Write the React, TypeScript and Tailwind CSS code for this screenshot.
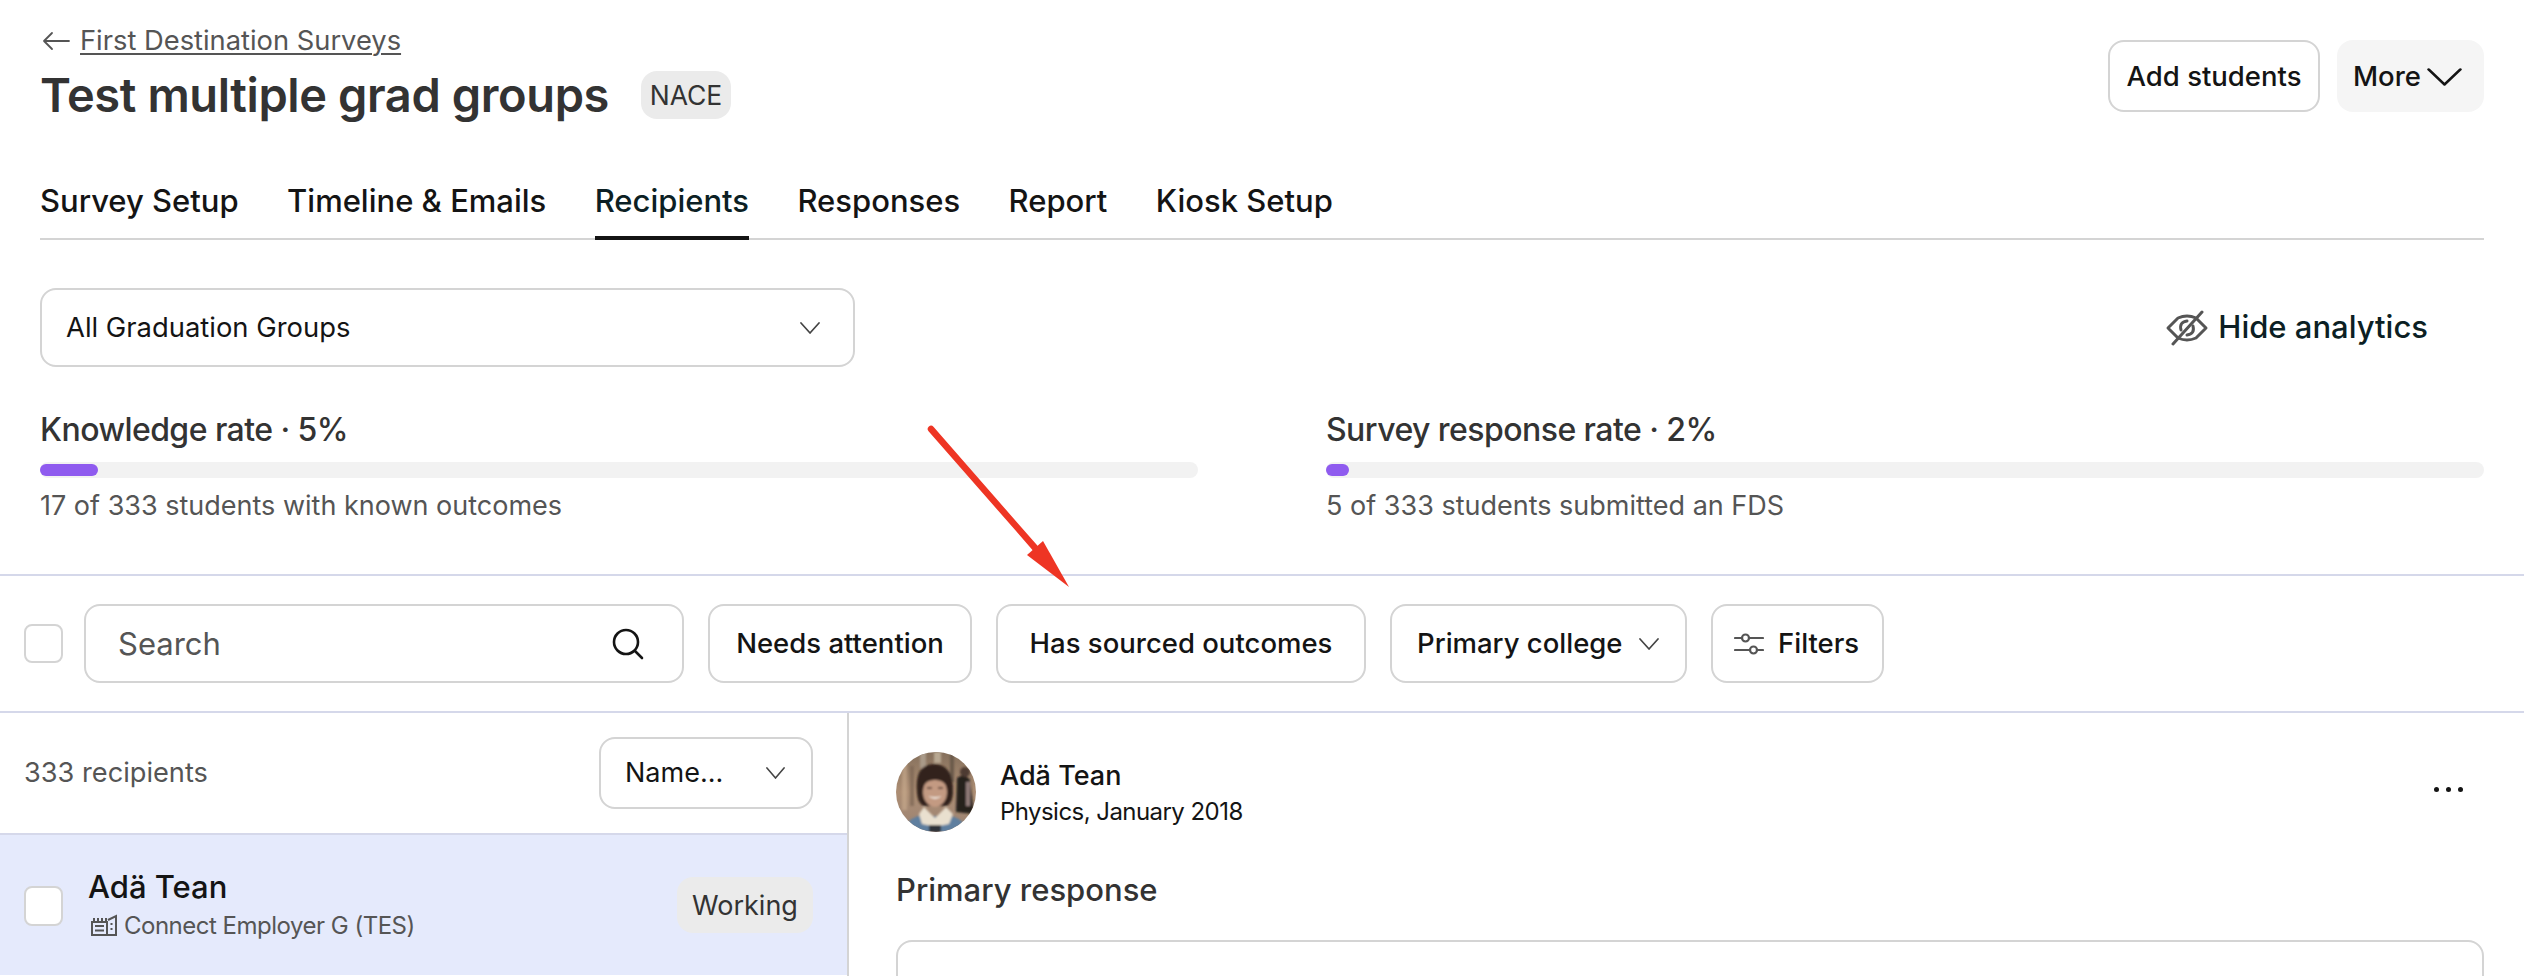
function Chevron({ className }: { className?: string }) {
	return (
		<svg viewBox="0 0 20 12" fill="none" stroke="currentColor" strokeWidth="1.7" strokeLinecap="round" strokeLinejoin="round" preserveAspectRatio="none" className={className}>
			<path d="M1 1 L10 11 L19 1" />
		</svg>
	)
}

function FilterButton({ children, className }: { children: React.ReactNode; className: string }) {
	return (
		<div className={`h-[79px] rounded-[16px] border-2 border-[#d4d4d4] flex items-center text-[27.5px] font-medium text-[#141414] ${className}`}>
			{children}
		</div>
	)
}

function Stat({ title, pct, sub, fill }: { title: string; pct: string; sub: string; fill: string }) {
	return (
		<div className="w-[1158px]">
			<div className="h-[36px] leading-[35px] text-[32px] font-medium text-[#333333] tracking-[-0.55px]">
				{title} · {pct}
			</div>
			<div className="mt-[14px] h-[16px] rounded-[8px] bg-[#f2f2f2] py-[2px]">
				<div className={`h-[12px] rounded-[6px] bg-[#8f5bef] ${fill}`} />
			</div>
			<div className="mt-[12px] h-[30px] leading-[31px] text-[27px] text-[#555555]">{sub}</div>
		</div>
	)
}

function Avatar() {
	return (
		<svg viewBox="0 0 80 80" className="w-[80px] h-[80px] rounded-full shrink-0">
			<defs>
				<linearGradient id="bg" x1="0" y1="0" x2="0" y2="1">
					<stop offset="0" stopColor="#85705c" />
					<stop offset="0.5" stopColor="#ad8e74" />
					<stop offset="1" stopColor="#9a8272" />
				</linearGradient>
				<filter id="soft"><feGaussianBlur stdDeviation="1.1" /></filter>
			</defs>
			<rect width="80" height="80" fill="url(#bg)" />
			<g filter="url(#soft)">
				<rect x="6" y="8" width="5" height="50" fill="#c9ab8f" opacity="0.6" />
				<rect x="14" y="14" width="4" height="40" fill="#7a6453" opacity="0.7" />
				<rect x="24" y="0" width="6" height="16" fill="#a99a88" />
				<rect x="38" y="0" width="7" height="11" fill="#b8a892" />
				<rect x="54" y="0" width="4" height="30" fill="#6a5a4c" />
				<path d="M61 26 Q68 20 74 28 L78 62 L60 60 Z" fill="#26211f" />
				<circle cx="69" cy="20" r="5" fill="#4d3a30" />
				<rect x="70" y="30" width="4" height="24" fill="#8f7a78" />
				<path d="M21 42 Q18 12 38 12 Q58 12 57 42 Q56 52 50 54 L28 54 Q22 52 21 42 Z" fill="#33221c" />
				<ellipse cx="39" cy="40" rx="12" ry="15" fill="#c39a82" />
				<path d="M27 34 Q29 22 39 23 Q47 23 51 34 Q46 27 38 28 Q31 28 27 34 Z" fill="#33221c" />
				<path d="M31 36 h5 M42 36 h5" stroke="#4c362b" strokeWidth="1.3" />
				<path d="M32 44 Q39 50 46 44 Q39 46 32 44 Z" fill="#efe4da" />
				<path d="M8 80 Q10 68 22 64 L56 64 Q68 68 74 80 Z" fill="#5f7f9f" />
				<path d="M23 62 L28 55 L39 66 L50 55 L57 62 L53 72 L43 74 L36 74 L26 72 Z" fill="#e9e0cf" />
				<rect x="33" y="73" width="12" height="7" fill="#2e3238" />
			</g>
		</svg>
	)
}

export default function App() {
	return (
		<div className="relative w-[2524px] h-[976px] overflow-hidden bg-white font-['Inter',sans-serif]">
			{/* page header */}
			<div className="px-[40px]">
				<div className="h-[134px] flex justify-between">
					<div className="pt-[25px]">
						<div className="h-[32px] flex items-center gap-[10px] text-[27.3px] text-[#555555]">
							<svg viewBox="0 0 28 20" fill="none" stroke="#555555" strokeWidth="1.8" strokeLinecap="round" strokeLinejoin="round" className="w-[28px] h-[20px] ml-[2px]">
								<path d="M27 10 H2 M10 2 L2 10 L10 18" />
							</svg>
							<span className="underline underline-offset-[3px] decoration-[2px]">First Destination Surveys</span>
						</div>
						<div className="mt-[13px] flex items-center gap-[32px]">
							<span className="h-[50px] leading-[50px] text-[47px] font-semibold text-[#333333] tracking-[-0.4px]">Test multiple grad groups</span>
							<span className="h-[48px] w-[90px] rounded-[16px] bg-[#ebebeb] flex items-center justify-center pt-[1px] text-[26.5px] text-[#333333]">NACE</span>
						</div>
					</div>
					<div className="pt-[40px] flex gap-[17px] text-[27.5px] font-medium text-[#141414]">
						<div className="w-[212px] h-[72px] rounded-[16px] border-2 border-[#d4d4d4] flex items-center justify-center pt-[1px]">Add students</div>
						<div className="w-[147px] h-[72px] rounded-[16px] bg-[#f5f5f5] flex items-center pl-[16px] gap-[6px] pt-[1px]">
							More
							<Chevron className="w-[35px] h-[18px]" />
						</div>
					</div>
				</div>

				{/* tabs */}
				<div className="h-[106px] flex gap-[48.4px] border-b-2 border-[#d4d4d4] text-[31px] font-medium text-[#141414]">
					<div className="pt-[44px]">Survey Setup</div>
					<div className="pt-[44px]">Timeline &amp; Emails</div>
					<div className="pt-[44px] h-[106px] border-b-4 border-[#141414] text-[#0c1f24]">Recipients</div>
					<div className="pt-[44px]">Responses</div>
					<div className="pt-[44px]">Report</div>
					<div className="pt-[44px]">Kiosk Setup</div>
				</div>

				{/* graduation group + analytics toggle */}
				<div className="mt-[48px] flex justify-between items-center">
					<div className="w-[815px] h-[79px] rounded-[16px] border-2 border-[#d4d4d4] flex items-center justify-between pl-[24px] pr-[33px] text-[27.4px] text-[#141414]">
						All Graduation Groups
						<Chevron className="w-[20px] h-[12px] text-[#444444]" />
					</div>
					<div className="flex items-center gap-[9px] pr-[56px] text-[31px] font-medium text-[#0c1f24]">
						<svg viewBox="0 0 44 36" fill="none" stroke="#555555" strokeWidth="3" strokeLinecap="round" strokeLinejoin="round" className="w-[44px] h-[36px]">
							<path d="M13 8 L3 18 L13 28 Q22 32 31 28 L41 18 L31 8 Q22 4 13 8 Z" />
							<path d="M16 20 Q14 12 22 11 M28 16 Q30 24 22 25" />
							<path d="M37 2 L8 34" />
						</svg>
						Hide analytics
					</div>
				</div>

				{/* rates */}
				<div className="mt-[45px] flex justify-between">
					<Stat title="Knowledge rate" pct="5%" sub="17 of 333 students with known outcomes" fill="w-[58px]" />
					<Stat title="Survey response rate" pct="2%" sub="5 of 333 students submitted an FDS" fill="w-[23px]" />
				</div>
			</div>

			{/* filter bar */}
			<div className="mt-[54px] h-[139px] border-y-2 border-[#d5d8ea] flex items-center pl-[24px] gap-[24px]">
				<div className="w-[39px] h-[39px] rounded-[8px] border-2 border-[#d4d4d4] bg-white -mr-[3px]" />
				<div className="w-[600px] h-[79px] rounded-[16px] border-2 border-[#d4d4d4] flex items-center justify-between pl-[32px] pr-[38px] text-[31px] text-[#555555]">
					<span className="pt-[2px]">Search</span>
					<svg viewBox="0 0 32 32" fill="none" stroke="#141414" strokeWidth="2.6" strokeLinecap="round" className="w-[32px] h-[32px]">
						<circle cx="14" cy="14" r="12" />
						<path d="M23 23 L30 30" />
					</svg>
				</div>
				<FilterButton className="w-[264px] justify-center">Needs attention</FilterButton>
				<FilterButton className="w-[370px] justify-center">Has sourced outcomes</FilterButton>
				<FilterButton className="w-[297px] pl-[25px] gap-[16px]">
					Primary college
					<Chevron className="w-[20px] h-[12px] text-[#444444]" />
				</FilterButton>
				<FilterButton className="w-[173px] pl-[21px] gap-[14px]">
					<svg viewBox="0 0 30 24" fill="none" stroke="#555555" strokeWidth="2.2" strokeLinecap="round" className="w-[30px] h-[24px]">
						<path d="M1 6 H8 M15 6 H29 M1 18 H16 M23 18 H29" />
						<circle cx="11.5" cy="6" r="3.5" />
						<circle cx="19.5" cy="18" r="3.5" />
					</svg>
					Filters
				</FilterButton>
			</div>

			{/* recipients + detail */}
			<div className="flex h-[264px]">
				<div className="w-[849px] border-r-2 border-[#d4d4d4] shrink-0">
					<div className="h-[122px] border-b-2 border-[#d5d8ea] flex items-center justify-between pl-[24px] pr-[34px] pb-[1px]">
						<span className="pt-[2px] text-[27.2px] text-[#555555]">333 recipients</span>
						<div className="w-[214px] h-[72px] rounded-[16px] border-2 border-[#d4d4d4] flex items-center justify-between pl-[24px] pr-[26px] text-[27px] text-[#141414]">
							<span className="pt-[2px]">Name...</span>
							<Chevron className="w-[19px] h-[12px] text-[#444444]" />
						</div>
					</div>
					<div className="h-[140px] bg-[#e5eafc] flex items-center pl-[24px] pr-[34px]">
						<div className="w-[39px] h-[40px] rounded-[8px] border-2 border-[#d4d4d4] bg-white shrink-0 mt-[1px]" />
						<div className="ml-[25px] flex-1">
							<div className="h-[36px] leading-[36px] text-[31px] font-medium text-[#141414]">Adä Tean</div>
							<div className="mt-[6px] flex items-center gap-[7px] text-[24px] leading-[30px] tracking-[-0.5px] text-[#555555]">
								<svg viewBox="0 0 26 24" fill="none" stroke="#555555" strokeWidth="2" className="w-[26px] h-[24px] ml-[3px]">
									<path d="M3 7 V4 M7 7 V4 M11 7 V4 M15 7 V4 M1 8 H16 V21 H1 Z M4 12 H13 M4 16.5 H13" />
									<path d="M17 6 L25 2 V21 H16 M20.5 9 V11 M20.5 14 V16" />
								</svg>
								Connect Employer G (TES)
							</div>
						</div>
						<div className="w-[136px] h-[56px] rounded-[16px] bg-[#ebebeb] flex items-center justify-center pt-[2px] text-[27px] text-[#333333]">Working</div>
					</div>
				</div>

				<div className="flex-1 pl-[47px] pr-[40px] pt-[39px]">
					<div className="flex items-center h-[80px]">
						<Avatar />
						<div className="ml-[24px] flex-1 pt-[4px]">
							<div className="h-[36px] leading-[36px] text-[27px] font-medium text-[#141414]">Adä Tean</div>
							<div className="h-[36px] leading-[36px] text-[24px] tracking-[-0.55px] text-[#141414]">Physics, January 2018</div>
						</div>
						<div className="flex gap-[7px] mr-[21px] mb-[6px]">
							<div className="w-[5px] h-[5px] rounded-full bg-[#141414]" />
							<div className="w-[5px] h-[5px] rounded-full bg-[#141414]" />
							<div className="w-[5px] h-[5px] rounded-full bg-[#141414]" />
						</div>
					</div>
					<div className="mt-[39px] h-[38px] leading-[38px] text-[31px] font-medium text-[#333333]">Primary response</div>
					<div className="mt-[31px] h-[80px] rounded-[16px] border-2 border-[#d4d4d4]" />
				</div>
			</div>

			{/* red annotation arrow drawn over the page */}
			<svg viewBox="0 0 2524 976" className="absolute inset-0 w-[2524px] h-[976px] pointer-events-none">
				<path d="M931 429 L1036 549" stroke="#ee3524" strokeWidth="6.5" strokeLinecap="round" fill="none" />
				<path d="M1069 587 L1027 555 L1043 541 Z" fill="#ee3524" />
			</svg>
		</div>
	)
}
